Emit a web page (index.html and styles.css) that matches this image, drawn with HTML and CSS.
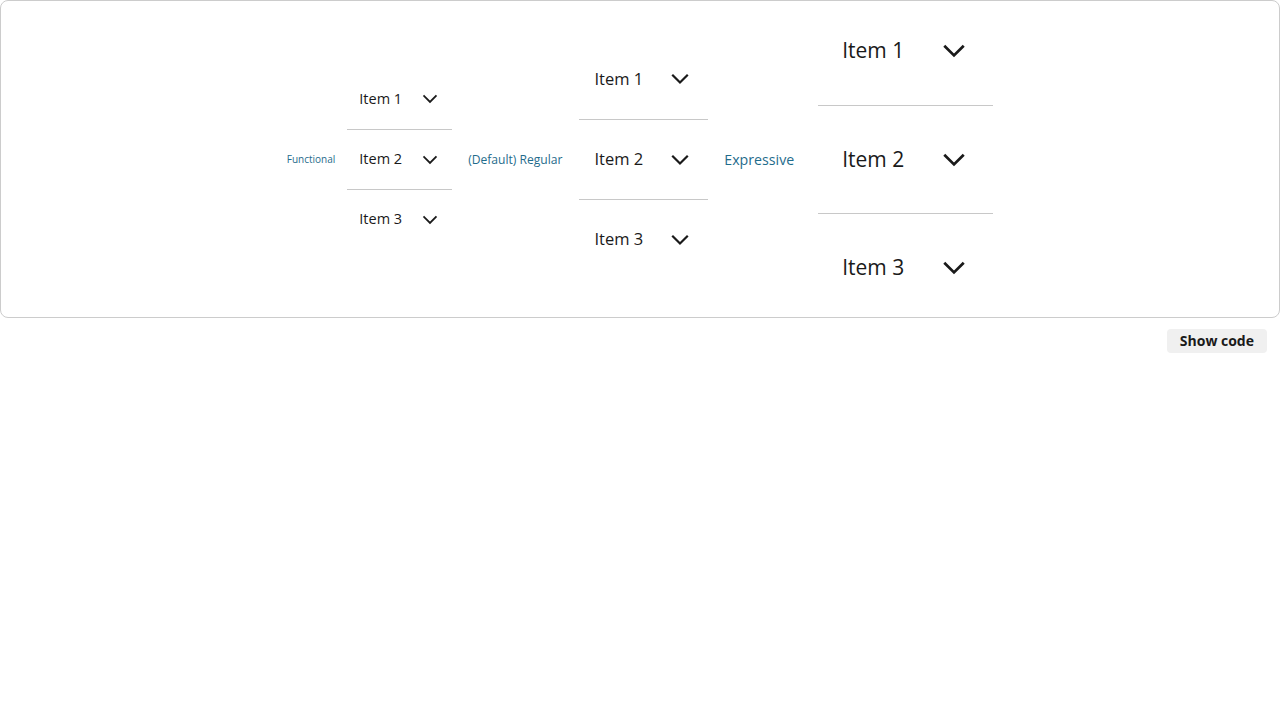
FILE: index.html
```html
<!DOCTYPE html>
<html lang="en">
<head>
<meta charset="utf-8">
<title>Accordion densities</title>
<link rel="stylesheet" href="styles.css">
</head>
<body>
<div class="example">
  <div class="group group-functional">
    <span class="label">Functional</span>
    <ul class="list">
      <li class="row"><span class="text">Item 1</span><svg class="chev" viewBox="0 0 24 24"><path d="M5 8.5l7 7 7-7"/></svg></li>
      <li class="row"><span class="text">Item 2</span><svg class="chev" viewBox="0 0 24 24"><path d="M5 8.5l7 7 7-7"/></svg></li>
      <li class="row"><span class="text">Item 3</span><svg class="chev" viewBox="0 0 24 24"><path d="M5 8.5l7 7 7-7"/></svg></li>
    </ul>
  </div>
  <div class="group group-regular">
    <span class="label">(Default) Regular</span>
    <ul class="list">
      <li class="row"><span class="text">Item 1</span><svg class="chev" viewBox="0 0 24 24"><path d="M5 8.5l7 7 7-7"/></svg></li>
      <li class="row"><span class="text">Item 2</span><svg class="chev" viewBox="0 0 24 24"><path d="M5 8.5l7 7 7-7"/></svg></li>
      <li class="row"><span class="text">Item 3</span><svg class="chev" viewBox="0 0 24 24"><path d="M5 8.5l7 7 7-7"/></svg></li>
    </ul>
  </div>
  <div class="group group-expressive">
    <span class="label">Expressive</span>
    <ul class="list">
      <li class="row"><span class="text">Item 1</span><svg class="chev" viewBox="0 0 24 24"><path d="M5 8.5l7 7 7-7"/></svg></li>
      <li class="row"><span class="text">Item 2</span><svg class="chev" viewBox="0 0 24 24"><path d="M5 8.5l7 7 7-7"/></svg></li>
      <li class="row"><span class="text">Item 3</span><svg class="chev" viewBox="0 0 24 24"><path d="M5 8.5l7 7 7-7"/></svg></li>
    </ul>
  </div>
</div>
<div class="actions">
  <button class="show-code">Show code</button>
</div>
</body>
</html>
```
FILE: styles.css
```css
html, body {
  margin: 0;
  padding: 0;
  background: #fff;
  font-family: "Open Sans", "Noto Sans", sans-serif;
  color: #1a1a1a;
}

.example {
  box-sizing: border-box;
  height: 318px;
  border: 1px solid #cccccc;
  border-radius: 8px;
  display: flex;
  justify-content: center;
  align-items: center;
  gap: 16px;
}

.group {
  display: flex;
  align-items: center;
}

.label {
  color: #1f6c8c;
  white-space: nowrap;
}

.list {
  list-style: none;
  margin: 0;
  padding: 0;
  display: flex;
  flex-direction: column;
}

.row {
  display: flex;
  align-items: center;
  border-top: 1px solid #c8c8c8;
  white-space: nowrap;
}

.row:first-child {
  border-top: none;
}

.text {
  margin-bottom: 2px;
}

.chev {
  fill: none;
  stroke: #1a1a1a;
  stroke-width: 2.2;
  stroke-linecap: square;
  stroke-linejoin: miter;
}

/* functional */
.group-functional { gap: 12px; }
.group-functional .label { font-size: 10px; }
.group-functional .row {
  height: 60px;
  box-sizing: border-box;
  padding: 0 12px;
  gap: 18px;
  font-size: 14.5px;
}
.group-functional .chev { width: 20px; height: 20px; }

/* regular */
.group-regular { gap: 16px; }
.group-regular .label { font-size: 12.1px; }
.group-regular .row {
  height: 80px;
  box-sizing: border-box;
  padding: 0 16px;
  gap: 25px;
  font-size: 16.5px;
}
.group-regular .chev { width: 24px; height: 24px; }

/* expressive */
.group-expressive { gap: 24px; }
.group-expressive .label { font-size: 14.2px; }
.group-expressive .row {
  height: 108px;
  box-sizing: border-box;
  padding: 0 24px;
  gap: 35px;
  font-size: 21px;
}
.group-expressive .chev { width: 30px; height: 30px; }

.actions {
  display: flex;
  justify-content: flex-end;
  padding: 11px 13px 0 0;
}

.show-code {
  font-family: "Open Sans", "Noto Sans", sans-serif;
  font-weight: 700;
  font-size: 14px;
  color: #1a1a1a;
  background: #f0f0f0;
  border: none;
  border-radius: 4px;
  height: 24px;
  padding: 0 13px;
  line-height: 24px;
  cursor: pointer;
}
```
